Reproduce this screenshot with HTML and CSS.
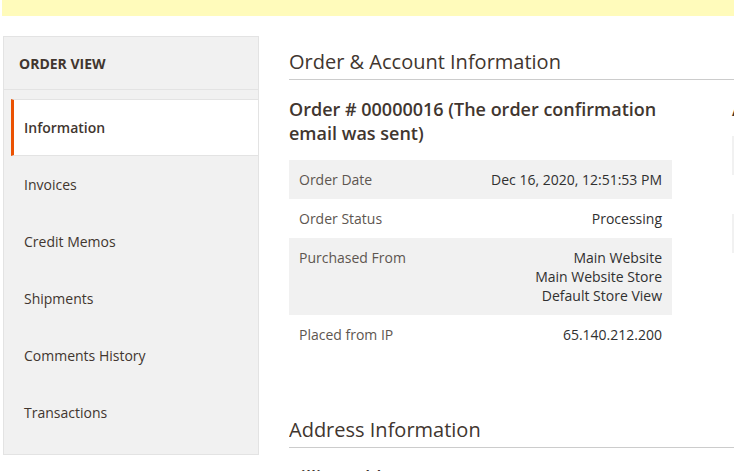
FILE: index.html
```html
<!DOCTYPE html>
<html lang="en">
<head>
<meta charset="utf-8">
<title>Order View</title>
<link rel="stylesheet" href="styles.css">
</head>
<body>
<div class="notice"></div>
<div class="page">
  <aside class="nav">
    <div class="nav-title">ORDER VIEW</div>
    <ul class="nav-list">
      <li class="nav-item active">Information</li>
      <li class="nav-item">Invoices</li>
      <li class="nav-item">Credit Memos</li>
      <li class="nav-item">Shipments</li>
      <li class="nav-item">Comments History</li>
      <li class="nav-item">Transactions</li>
    </ul>
  </aside>
  <main class="main">
    <div class="main-inner">
      <section class="section">
        <h2 class="section-title">Order &amp; Account Information</h2>
        <div class="cols">
          <div class="col">
            <h3 class="block-title">Order # 00000016 (The order confirmation email was sent)</h3>
            <table class="info-table">
              <tr><th>Order Date</th><td>Dec 16, 2020, 12:51:53 PM</td></tr>
              <tr><th>Order Status</th><td>Processing</td></tr>
              <tr><th>Purchased From</th><td>Main Website<br>Main Website Store<br>Default Store View</td></tr>
              <tr><th>Placed from IP</th><td>65.140.212.200</td></tr>
            </table>
          </div>
          <div class="col">
            <h3 class="block-title">Account Information</h3>
            <table class="info-table">
              <tr><th>Customer Name</th><td>Guest</td></tr>
              <tr><th>Email</th><td>guest@example.com</td></tr>
              <tr><th>Customer Group</th><td>NOT LOGGED IN</td></tr>
            </table>
          </div>
        </div>
      </section>
      <section class="section section-address">
        <h2 class="section-title">Address Information</h2>
        <div class="cols">
          <div class="col">
            <h3 class="block-title">Billing Address</h3>
          </div>
          <div class="col">
            <h3 class="block-title">Shipping Address</h3>
          </div>
        </div>
      </section>
    </div>
  </main>
</div>
</body>
</html>
```

FILE: styles.css
```css
html, body {
  margin: 0;
  padding: 0;
  overflow: hidden;
  background: #ffffff;
}
body {
  font-family: "Open Sans", "Noto Sans", sans-serif;
  color: #303030;
  font-size: 14px;
}
.notice {
  height: 16px;
  margin-left: 2px;
  background: #fffbbb;
}
.page {
  display: flex;
  align-items: flex-start;
  padding-top: 20px;
}
.nav {
  flex: 0 0 256px;
  box-sizing: border-box;
  margin-left: 3px;
  border: 1px solid #e3e3e3;
  background: #f1f1f1;
}
.nav-title {
  height: 52px;
  display: flex;
  align-items: center;
  padding: 0 15px;
  border-bottom: 1px solid #e3e3e3;
  font-size: 14px;
  font-weight: 700;
  color: #41362f;
}
.nav-list {
  list-style: none;
  margin: 0;
  padding: 9px 0 13px 7px;
}
.nav-item {
  box-sizing: border-box;
  height: 57px;
  display: flex;
  align-items: center;
  padding-left: 13px;
  font-size: 14px;
  color: #41362f;
}
.nav-item.active {
  background: #ffffff;
  border-left: 3px solid #eb5202;
  border-top: 1px solid #e3e3e3;
  border-bottom: 1px solid #e3e3e3;
  padding-left: 10px;
  font-weight: 600;
}
.main {
  flex: 1;
  min-width: 0;
  overflow: hidden;
  margin-left: 30px;
}
.main-inner {
  width: 826px;
}
.section-title {
  margin: 14px 0 0;
  padding-bottom: 5px;
  border-bottom: 1px solid #cccccc;
  font-size: 20px;
  line-height: 24px;
  font-weight: 400;
  color: #41362f;
}
.section-address {
  margin-top: 64px;
}
.cols {
  display: grid;
  grid-template-columns: 383px 383px;
  column-gap: 60px;
}
.block-title {
  margin: 17px 0 15px;
  font-size: 18px;
  line-height: 24px;
  font-weight: 600;
  color: #41362f;
}
.info-table {
  width: 100%;
  border-collapse: collapse;
  font-size: 14px;
  line-height: 19px;
}
.info-table th,
.info-table td {
  padding: 10px;
  vertical-align: top;
}
.info-table th {
  text-align: left;
  font-weight: 400;
  color: #5e5650;
}
.info-table td {
  text-align: right;
  color: #303030;
}
.info-table tr:nth-child(odd) th,
.info-table tr:nth-child(odd) td {
  background: #f1f1f1;
}
```
